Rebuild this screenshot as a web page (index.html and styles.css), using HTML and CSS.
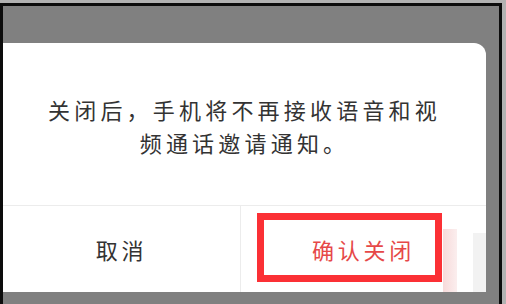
FILE: index.html
```html
<!DOCTYPE html>
<html lang="zh-CN">
<head>
<meta charset="utf-8">
<title>关闭通知</title>
<link rel="stylesheet" href="styles.css">
</head>
<body>
<div class="frame">
  <div class="dialog">
    <div class="message">
      <p>关闭后，手机将不再接收语音和视<br>频通话邀请通知。</p>
    </div>
    <div class="actions">
      <div class="btn cancel">取消</div>
      <div class="btn confirm">确认关闭</div>
    </div>
    <div class="highlight"></div>
    <div class="smudge smudge-a"></div>
    <div class="smudge smudge-b"></div>
  </div>
</div>
</body>
</html>
```

FILE: styles.css
```css
html, body {
  margin: 0;
  padding: 0;
}
body {
  width: 506px;
  height: 304px;
  overflow: hidden;
  background: #b2b2b2;
  font-family: "Noto Sans CJK SC", "Noto Sans", sans-serif;
}
.frame {
  margin-top: 3px;
  width: 496px;
  height: 261px;
  border: 3px solid #0c0c0c;
  border-bottom-width: 2px;
  background: #808080;
  padding-top: 37px;
  box-sizing: content-box;
}
.dialog {
  position: relative;
  width: 483px;
  height: 249px;
  background: #ffffff;
  border-top-right-radius: 12px;
  display: flex;
  flex-direction: column;
}
.message {
  height: 163px;
  display: flex;
  align-items: center;
  justify-content: center;
  padding-top: 3px;
  box-sizing: border-box;
  border-bottom: 1px solid #ececec;
}
.message p {
  margin: 0;
  font-size: 22px;
  line-height: 33px;
  letter-spacing: 4.2px;
  color: #333333;
  text-align: center;
}
.actions {
  flex: 1;
  display: flex;
}
.btn {
  display: flex;
  align-items: center;
  justify-content: center;
  font-size: 22px;
  letter-spacing: 3.8px;
}
.cancel {
  width: 237px;
  color: #333333;
  border-right: 1px solid #ececec;
}
.confirm {
  flex: 1;
  color: #e64848;
}
.highlight {
  position: absolute;
  left: 254px;
  top: 170px;
  width: 185px;
  height: 69px;
  border: 7px solid #fb3035;
  box-sizing: border-box;
}
.smudge {
  position: absolute;
}
.smudge-a {
  left: 440px;
  top: 186px;
  width: 14px;
  height: 63px;
  background: linear-gradient(90deg, #f7dada, #fbeeee);
}
.smudge-b {
  left: 470px;
  top: 190px;
  width: 13px;
  height: 59px;
  background: #f2f2f2;
}
```
